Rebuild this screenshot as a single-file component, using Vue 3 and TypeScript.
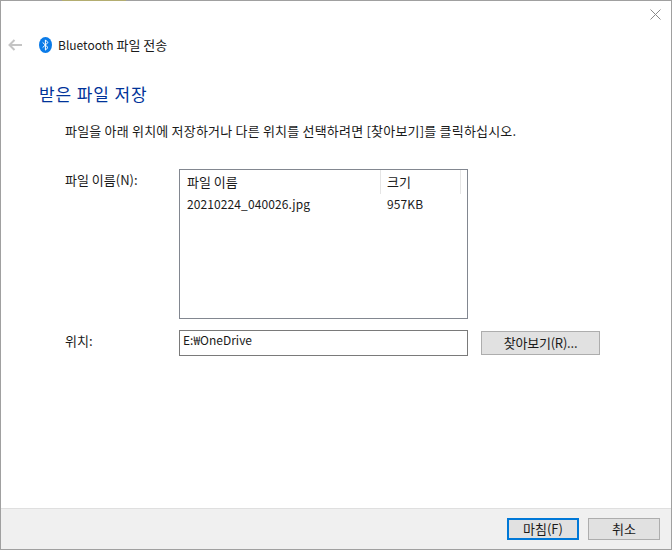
<script setup lang="ts">
const title = '파일 전송'
</script>

<template>
  <div class="window">
    <div class="top-noise"></div>
    <div class="body">
      <div class="close-row">
        <svg class="close" width="11" height="11" viewBox="0 0 11 11"><path d="M.5.5l10 10M10.5.5l-10 10" stroke="#8a8a8a" fill="none" /></svg>
      </div>
      <div class="nav">
        <svg class="back" width="14" height="12" viewBox="0 0 14 12"><path d="M6.5 1L1.5 6l5 5M1.5 6H14" stroke="#c4c4c4" stroke-width="2" fill="none" /></svg>
        <svg class="bt" width="13" height="16" viewBox="0 0 13 16">
          <ellipse cx="6.5" cy="8" rx="6.5" ry="8" fill="#0a7be8" />
          <path d="M3.6 5.4l5.4 5.1-2.6 2.6V2.9L9 5.5l-5.4 5.1" stroke="#fff" stroke-width="1" fill="none" />
        </svg>
        <span class="title"><span class="latin">Bluetooth</span> {{ title }}</span>
      </div>
      <h1 class="heading">받은 파일 저장</h1>
      <p class="desc">파일을 아래 위치에 저장하거나 다른 위치를 선택하려면 [찾아보기]를 클릭하십시오.</p>
      <div class="row files-row">
        <label class="label">파일 이름(N):</label>
        <div class="list">
          <div class="list-head">
            <span class="col-name">파일 이름</span>
            <span class="col-size">크기</span>
          </div>
          <div class="list-item">
            <span class="cell-name">20210224_040026.jpg</span>
            <span class="cell-size">957KB</span>
          </div>
        </div>
      </div>
      <div class="row loc-row">
        <label class="label loc-label">위치:</label>
        <div class="input">E:₩OneDrive</div>
        <button class="btn browse">찾아보기(R)...</button>
      </div>
    </div>
    <div class="footer">
      <button class="btn primary">마침(F)</button>
      <button class="btn">취소</button>
    </div>
  </div>
</template>

<style>
html, body { margin: 0; background: #fff; }
</style>

<style scoped>
.window {
  position: relative;
  box-sizing: border-box;
  width: 672px;
  height: 550px;
  display: flex;
  flex-direction: column;
  border: 1px solid #a0a0a0;
  background: #fff;
  color: #1a1a1a;
  font-family: "Noto Sans CJK KR", "Liberation Sans", sans-serif;
  font-size: 13px;
  line-height: 16px;
}
.top-noise {
  position: absolute;
  top: -1px;
  left: 61px;
  width: 64px;
  height: 1px;
  background: #b3ad70;
}
.body { flex: 1; min-height: 0; }
.close-row { display: flex; justify-content: flex-end; padding: 8px 10px 0 0; height: 11px; }
.nav { display: flex; align-items: center; margin-top: 15px; height: 20px; padding-left: 7px; }
.back { margin-right: 17px; }
.bt { margin-right: 6px; }
.title { font-size: 13px; }
.latin { font-size: 12px; }
.heading {
  margin: 29px 0 0 38px;
  font-size: 17px;
  line-height: 20px;
  font-weight: 400;
  color: #003399;
  letter-spacing: .9px;
}
.desc { margin: 19px 0 0 64px; letter-spacing: .2px; }
.row { display: flex; }
.files-row { margin-top: 30px; }
.label { width: 114px; margin-left: 64px; padding-top: 3px; }
.list {
  box-sizing: border-box;
  width: 289px;
  height: 150px;
  border: 1px solid #828790;
}
.list-head { display: flex; height: 24px; align-items: center; }
.col-name { box-sizing: border-box; width: 201px; padding-left: 7px; height: 24px; line-height: 24px; border-right: 1px solid #e5e5e5; }
.col-size { box-sizing: border-box; width: 80px; padding-left: 6px; height: 24px; line-height: 24px; border-right: 1px solid #e5e5e5; }
.list-item { display: flex; height: 19px; align-items: center; font-size: 12px; letter-spacing: .1px; }
.cell-name { width: 200px; padding-left: 7px; box-sizing: border-box; }
.cell-size { padding-left: 7px; }
.loc-row { margin-top: 11px; align-items: flex-start; }
.loc-label { padding-top: 3px; }
.input {
  box-sizing: border-box;
  width: 289px;
  height: 26px;
  border: 1px solid #7a7a7a;
  padding: 1px 3px 0;
  line-height: 16px;
  font-size: 12px;
}
.btn {
  box-sizing: border-box;
  width: 72px;
  height: 22px;
  padding: 0;
  background: #e1e1e1;
  border: 1px solid #adadad;
  color: #1a1a1a;
  font: inherit;
}
.browse { width: 119px; height: 24px; margin: 1px 0 0 13px; letter-spacing: -.2px; }
.footer {
  box-sizing: border-box;
  height: 41px;
  flex: none;
  display: flex;
  justify-content: flex-end;
  gap: 9px;
  padding: 9px 11px 0 0;
  background: #f0f0f0;
  border-top: 1px solid #dfdfdf;
}
.primary { border: 2px solid #0078d7; }
</style>
